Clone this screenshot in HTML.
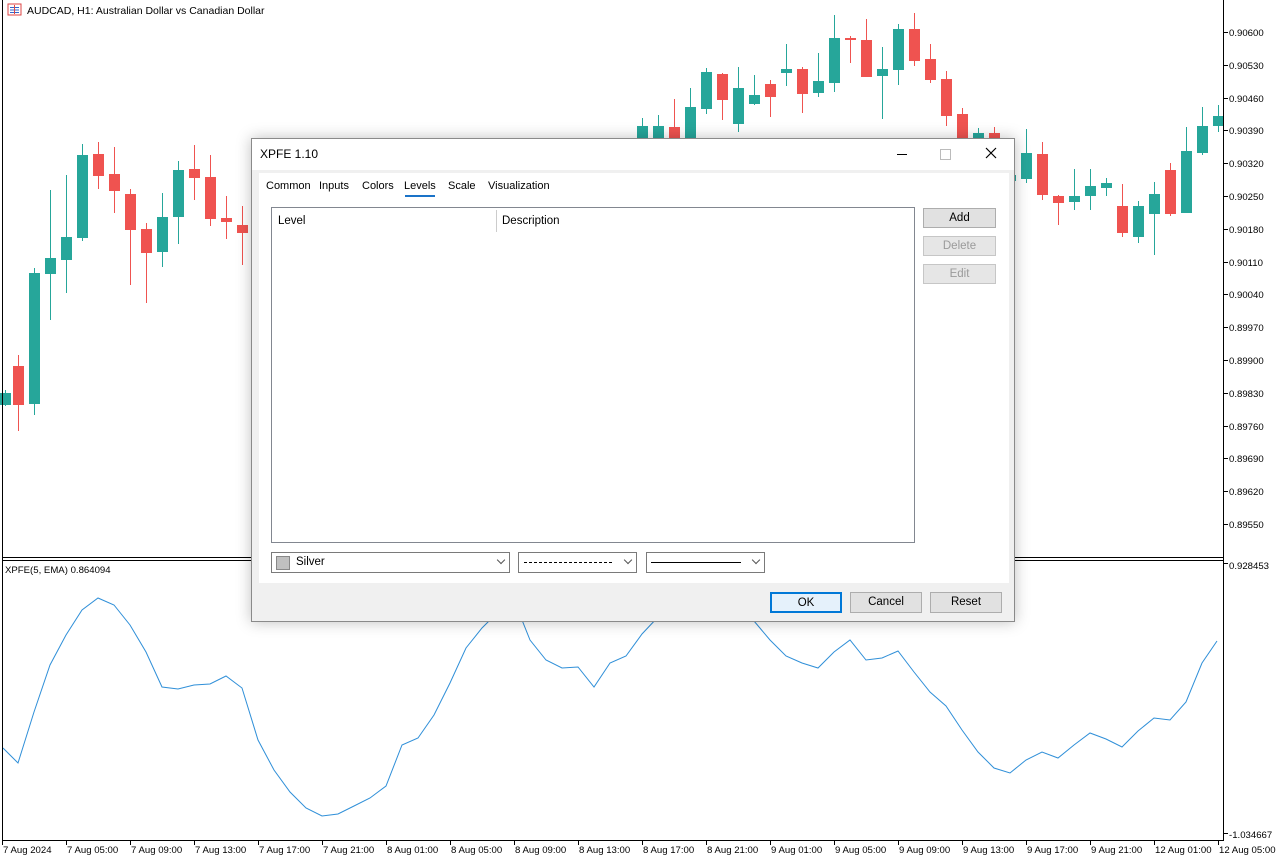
<!DOCTYPE html>
<html><head><meta charset="utf-8"><style>
body{margin:0;width:1277px;height:855px;overflow:hidden;background:#fff;font-family:"Liberation Sans",sans-serif;position:relative}
svg{position:absolute;left:0;top:0}
.ax{font-size:9.6px;fill:#000;font-family:"Liberation Sans",sans-serif}
#dlg{position:absolute;left:251px;top:138px;width:762px;height:482px;background:#f0f0f0;border:1px solid #8a8a8a;box-shadow:0 0 14px rgba(0,0,0,.25);font-size:12px;color:#000}
#tb{position:absolute;left:0;top:0;width:762px;height:31px;background:#fff}
#tb .t{position:absolute;left:8px;top:8px;font-size:12px}
#panel{position:absolute;left:7px;top:34px;width:750px;height:410px;background:#fff}
.tab{position:absolute;top:7px;font-size:11px}
#list{position:absolute;left:12px;top:34px;width:642px;height:334px;border:1px solid #828790;background:#fff}
.btn{position:absolute;border:1px solid #adadad;background:#e1e1e1;text-align:center;font-size:11.5px;box-sizing:border-box}
.dd{position:absolute;top:379px;height:21px;border:1px solid #7a7a7a;background:#fff;box-sizing:border-box}
.chev{position:absolute;right:5px;top:4px;width:5px;height:5px;border-right:1px solid #555;border-bottom:1px solid #555;transform:rotate(45deg)}
</style></head><body>
<svg width="1277" height="855" id="c">
<g id="cand"></g>
<polyline id="ind" fill="none" stroke="#2f8fd8" stroke-width="1" points="3,748 18,763 34,712 50,665 66,635 82,610 98,598 114,605 130,625 146,652 162,687 178,689 194,685 210,684 226,676 242,688 258,740 274,770 290,792 306,808 322,816 338,814 354,806 370,798 386,786 402,745 418,738 434,715 450,683 466,648 482,628 498,612 514,600 530,640 546,660 562,668 578,667 594,687 610,663 626,656 642,634 658,617 674,600 754,621 770,640 786,656 802,663 818,668 834,652 850,640 866,660 882,658 898,651 914,672 930,692 946,706 962,730 978,752 994,768 1010,773 1026,760 1042,752 1058,758 1074,745 1090,733 1106,739 1122,747 1138,731 1154,718 1170,720 1186,702 1202,663 1217,641"/>
<line x1="2.5" y1="0" x2="2.5" y2="841" stroke="#000"/>
<line x1="1223.5" y1="0" x2="1223.5" y2="841" stroke="#000"/>
<line x1="2" y1="557.5" x2="1224" y2="557.5" stroke="#000"/>
<line x1="2" y1="560.5" x2="1224" y2="560.5" stroke="#000"/>
<line x1="2" y1="840.5" x2="1224" y2="840.5" stroke="#000"/>
<g id="axes"></g>
<g>
<rect x="8" y="4" width="13" height="11" fill="none" stroke="#d44"/>
<line x1="10" y1="7.5" x2="19" y2="7.5" stroke="#36c"/><line x1="10" y1="10" x2="19" y2="10" stroke="#36c"/><line x1="10" y1="12.5" x2="19" y2="12.5" stroke="#36c"/>
<line x1="14.5" y1="5" x2="14.5" y2="14" stroke="#d44"/>
<text x="27" y="14" class="ax" style="font-size:10.5px">AUDCAD, H1:  Australian Dollar vs Canadian Dollar</text>
<text x="5" y="573" class="ax">XPFE(5, EMA) 0.864094</text>
</g>
</svg>
<div id="dlg">
 <div id="tb"><span class="t">XPFE 1.10</span>
  <div style="position:absolute;left:645px;top:15px;width:10px;height:1px;background:#000"></div>
  <div style="position:absolute;left:688px;top:10px;width:9px;height:9px;border:1px solid #bbb"></div>
  <svg style="left:733px;top:8px" width="12" height="12"><path d="M1 1L11 11M11 1L1 11" stroke="#000" stroke-width="1.2"/></svg>
 </div>
 <div id="panel">
  <span class="tab" style="left:7px">Common</span>
  <span class="tab" style="left:60px">Inputs</span>
  <span class="tab" style="left:103px">Colors</span>
  <span class="tab" style="left:145px">Levels</span>
  <div style="position:absolute;left:146px;top:22px;width:30px;height:2px;background:#1a73c8"></div>
  <span class="tab" style="left:189px">Scale</span>
  <span class="tab" style="left:229px">Visualization</span>
  <div id="list">
   <span style="position:absolute;left:6px;top:7px;font-size:11.5px">Level</span>
   <div style="position:absolute;left:224px;top:2px;width:1px;height:22px;background:#ccc"></div>
   <span style="position:absolute;left:230px;top:7px;font-size:11.5px">Description</span>
  </div>
  <div class="btn" style="left:664px;top:35px;width:73px;height:20px;line-height:18px">Add</div>
  <div class="btn" style="left:664px;top:63px;width:73px;height:20px;line-height:18px;color:#9a9a9a;border-color:#c6c6c6;background:#e6e6e6">Delete</div>
  <div class="btn" style="left:664px;top:91px;width:73px;height:20px;line-height:18px;color:#9a9a9a;border-color:#c6c6c6;background:#e6e6e6">Edit</div>
  <div class="dd" style="left:12px;width:239px"><div style="position:absolute;left:4px;top:3px;width:12px;height:12px;background:#c0c0c0;border:1px solid #888"></div><span style="position:absolute;left:24px;top:3px;font-size:11.5px">Silver</span><div class="chev"></div></div>
  <div class="dd" style="left:259px;width:119px"><div style="position:absolute;left:5px;top:9px;width:88px;border-top:1px dashed #000"></div><div class="chev"></div></div>
  <div class="dd" style="left:387px;width:119px"><div style="position:absolute;left:4px;top:9px;border-top:1px solid #000;width:90px"></div><div class="chev"></div></div>
 </div>
 <div class="btn" style="left:518px;top:453px;width:72px;height:21px;line-height:19px;border:2px solid #0078d7;background:#e5f1fb">OK</div>
 <div class="btn" style="left:598px;top:453px;width:72px;height:21px;line-height:19px">Cancel</div>
 <div class="btn" style="left:678px;top:453px;width:72px;height:21px;line-height:19px">Reset</div>
</div>
<script>
var G="#26a69a",R="#ef5350";
var d=[[5,390,406,393,405,G],[18,355,431,366,405,R],[34,268,415,273,404,G],[50,190,320,258,274,G],[66,175,293,237,260,G],[82,144,241,155,238,G],[98,142,189,154,176,R],[114,147,213,174,191,R],[130,189,285,194,230,R],[146,223,303,229,253,R],[162,193,267,217,252,G],[178,161,244,170,217,G],[194,145,200,169,178,R],[210,155,226,177,219,R],[226,196,239,218,222,R],[242,206,265,225,233,R],
[642,118,140,126,140,G],[658,115,140,126,140,G],[674,99,140,127,140,R],[690,88,140,107,140,G],[706,68,114,72,109,G],[722,73,120,74,100,R],[738,67,132,88,124,G],[754,75,105,95,104,G],[770,80,117,84,97,R],[786,44,86,69,73,G],[802,67,113,69,94,R],[818,53,97,81,93,G],[834,15,92,38,83,G],[850,36,63,38,40,R],[866,19,77,40,77,R],[882,47,119,69,76,G],[898,24,85,29,70,G],[914,13,66,29,61,R],[930,44,83,59,80,R],[946,71,126,79,116,R],[962,108,140,114,140,R],[978,128,140,133,140,G],[994,127,140,133,140,R],[1010,160,185,175,181,G],
[1026,129,183,153,179,G],[1042,142,200,154,195,R],[1058,195,225,196,203,R],[1074,169,210,196,202,G],[1090,169,210,186,196,G],[1106,178,196,183,188,G],[1122,184,237,206,233,R],[1138,201,243,206,237,G],[1154,182,255,194,214,G],[1170,163,216,170,214,R],[1186,127,213,151,213,G],[1202,107,155,126,153,G],[1218,105,132,116,126,G]];
var s="";d.forEach(function(c){s+='<line x1="'+(c[0]+.5)+'" y1="'+c[1]+'" x2="'+(c[0]+.5)+'" y2="'+c[2]+'" stroke="'+c[5]+'"/><rect x="'+(c[0]-5)+'" y="'+c[3]+'" width="11" height="'+Math.max(2,c[4]-c[3])+'" fill="'+c[5]+'"/>';});
document.getElementById("cand").innerHTML=s;
var a="",p=["0.90600","0.90530","0.90460","0.90390","0.90320","0.90250","0.90180","0.90110","0.90040","0.89970","0.89900","0.89830","0.89760","0.89690","0.89620","0.89550"];
p.forEach(function(v,i){var y=Math.round(32+i*32.8);a+='<line x1="1224" y1="'+(y+.5)+'" x2="1228" y2="'+(y+.5)+'" stroke="#000"/><text class="ax" x="1229" y="'+(y+4)+'">'+v+'</text>';});
a+='<line x1="1224" y1="563.5" x2="1228" y2="563.5" stroke="#000"/><text class="ax" x="1229" y="569">0.928453</text>';
a+='<line x1="1224" y1="833.5" x2="1228" y2="833.5" stroke="#000"/><text class="ax" x="1229" y="838">-1.034667</text>';
var t=["7 Aug 2024","7 Aug 05:00","7 Aug 09:00","7 Aug 13:00","7 Aug 17:00","7 Aug 21:00","8 Aug 01:00","8 Aug 05:00","8 Aug 09:00","8 Aug 13:00","8 Aug 17:00","8 Aug 21:00","9 Aug 01:00","9 Aug 05:00","9 Aug 09:00","9 Aug 13:00","9 Aug 17:00","9 Aug 21:00","12 Aug 01:00","12 Aug 05:00"];
t.forEach(function(v,i){var x=2+i*64;a+='<line x1="'+(x+.5)+'" y1="841" x2="'+(x+.5)+'" y2="845" stroke="#000"/><text class="ax" x="'+(x+1)+'" y="853">'+v+'</text>';});
document.getElementById("axes").innerHTML=a;
</script>
</body></html>
